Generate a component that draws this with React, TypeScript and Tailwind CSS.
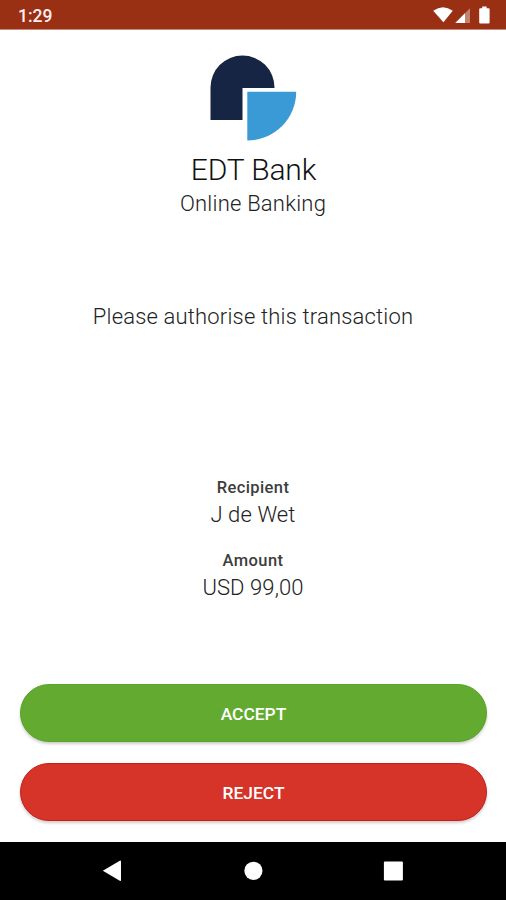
import type { ReactNode } from "react";

interface DetailProps {
  label: string;
  value: string;
}

interface ActionButtonProps {
  className: string;
  children: ReactNode;
}

function StatusBar() {
  return (
    <div className="flex h-[30px] shrink-0 items-start justify-between border-b border-[#c98c78] bg-[#9a3013] pl-[18px] pr-[15px] text-white">
      <span className="pt-[4px] text-[17.5px] font-medium leading-[24px] text-[#ffeef0]">
        1:29
      </span>
      <svg className="mt-[5px] h-[19px] w-[60px]" viewBox="0 0 60 19" fill="#fff">
        {/* wifi */}
        <path d="M2.2 5.8 Q12 -1.2 21.8 5.8 L12.4 17.2 Z" />
        {/* signal */}
        <path d="M39 3.2 V18 H24.3 Z" fillOpacity="0.4" />
        <path d="M34 8.2 V18 H24.3 Z" />
        {/* battery */}
        <path d="M51.2 1.4 h4.4 v1.8 h2 q1 0 1 1 v13.2 q0 1 -1 1 h-8.4 q-1 0 -1 -1 v-13.2 q0 -1 1 -1 h2 z" />
      </svg>
    </div>
  );
}

function Logo() {
  return (
    <svg className="h-[86px] w-[88px]" viewBox="0 0 88 86">
      <path d="M1.5 65 V32.5 A32 32 0 0 1 65.5 32.5 V33 H33.5 V65 Z" fill="#162543" />
      <path d="M38.3 36.8 H87.2 A48.8 48.8 0 0 1 38.3 85.5 Z" fill="#3a9ad5" />
    </svg>
  );
}

function Detail({ label, value }: DetailProps) {
  return (
    <div className="flex h-[51px] flex-col items-center">
      <span className="text-[16.5px] font-medium leading-[24px] tracking-[0.4px] text-[#3d3d3d]">
        {label}
      </span>
      <span className="pt-px text-[22px] font-light leading-[27px] tracking-[0.1px] text-[#222]">
        {value}
      </span>
    </div>
  );
}

function ActionButton({ className, children }: ActionButtonProps) {
  return (
    <button
      className={`h-[58px] w-full rounded-full border pt-[3px] text-[17.4px] font-medium text-white shadow-[0_2px_3px_rgba(0,0,0,0.2)] ${className}`}
    >
      {children}
    </button>
  );
}

function NavigationBar() {
  return (
    <div className="flex h-[58px] shrink-0 justify-center bg-black">
      <svg className="h-[58px] w-[350px]" viewBox="0 0 350 58" fill="#fff">
        <path d="M24.8 28.8 L41.8 18.8 Q43 18.2 43 19.5 V38 Q43 39.3 41.8 38.7 Z" />
        <circle cx="175.4" cy="28.8" r="9.1" />
        <rect x="305.9" y="19.5" width="19" height="19" rx="1" />
      </svg>
    </div>
  );
}

function App() {
  return (
    <div className="flex h-[900px] w-[506px] flex-col overflow-hidden bg-white font-['Roboto',sans-serif]">
      <StatusBar />
      <main className="flex grow flex-col items-center">
        <div className="mt-[25px]">
          <Logo />
        </div>
        <h1 className="mt-[11px] pl-px text-[30px] font-light leading-[36px] tracking-[-0.15px] text-[#111]">
          EDT Bank
        </h1>
        <h2 className="mt-[2px] text-[22px] font-light leading-[28px] tracking-[0.22px] text-[#222]">
          Online Banking
        </h2>
        <p className="mt-[85px] text-[22px] font-light leading-[28px] tracking-[0.18px] text-[#222]">
          Please authorise this transaction
        </p>
        <div className="mt-[145px] flex flex-col gap-[22px]">
          <Detail label="Recipient" value="J de Wet" />
          <Detail label="Amount" value="USD 99,00" />
        </div>
        <div className="mt-auto flex w-full flex-col gap-[21px] pb-[21px] pl-[20px] pr-[19px]">
          <ActionButton className="border-[#5aa428] bg-[#62ab30]">ACCEPT</ActionButton>
          <ActionButton className="border-[#cb1c16] bg-[#d63329]">REJECT</ActionButton>
        </div>
      </main>
      <NavigationBar />
    </div>
  );
}

export default App;
